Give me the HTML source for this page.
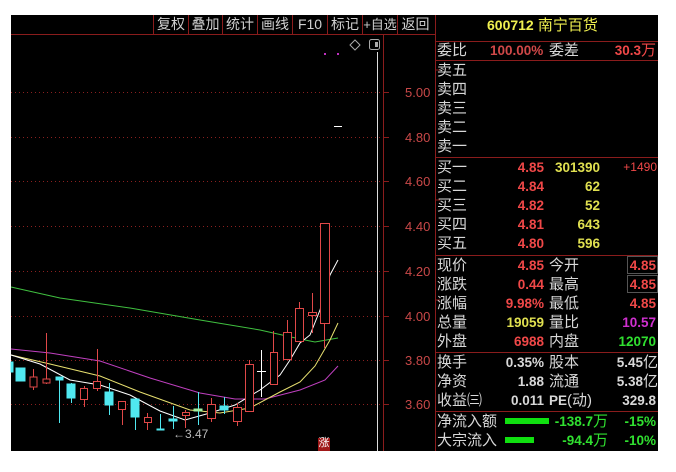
<!DOCTYPE html>
<html><head><meta charset="utf-8"><style>
*{margin:0;padding:0;box-sizing:border-box}
body{width:676px;height:472px;background:#fff;position:relative;overflow:hidden;font-family:"Liberation Sans","Noto Sans CJK SC",sans-serif}
#bg{position:absolute;left:11px;top:15px;width:647px;height:436px;background:#000}
.t{position:absolute;white-space:nowrap;line-height:19px;font-size:15px}
.l{color:#d8d8d8}
.n{font-weight:bold;font-size:13.5px;font-family:"Liberation Sans","Noto Sans CJK SC",sans-serif}
.r{color:#f04848}.y{color:#e0e050}.g{color:#30e030}.w{color:#d8d8d8}.m{color:#d030d0}
.hl{position:absolute;left:435px;width:223px;height:1px;background:#8a1c1c}
.btn{position:absolute;top:15px;height:19px;line-height:19px;color:#cfcfcf;font-size:14px;text-align:center;white-space:nowrap;overflow:hidden}
.box{position:absolute;border:1px solid #555}
</style></head><body>
<div id="bg"></div>
<svg style="position:absolute;left:0;top:0" width="676" height="472">
<line x1="11" y1="34.5" x2="435" y2="34.5" stroke="#8a1c1c"/>
<g stroke="#8a1c1c"><line x1="153.5" y1="15" x2="153.5" y2="34"/><line x1="188.5" y1="15" x2="188.5" y2="34"/><line x1="222.5" y1="15" x2="222.5" y2="34"/><line x1="257.5" y1="15" x2="257.5" y2="34"/><line x1="292.5" y1="15" x2="292.5" y2="34"/><line x1="327.5" y1="15" x2="327.5" y2="34"/><line x1="362.5" y1="15" x2="362.5" y2="34"/><line x1="397.5" y1="15" x2="397.5" y2="34"/></g>
<line x1="383.5" y1="35" x2="383.5" y2="451" stroke="#8a1c1c"/>
<line x1="435.5" y1="15" x2="435.5" y2="451" stroke="#8a1c1c"/>
<line x1="377.5" y1="52" x2="377.5" y2="451" stroke="#ddd"/>
<g stroke="#8a2020" stroke-dasharray="1,3">
<line x1="11" y1="92.5" x2="383" y2="92.5"/><line x1="11" y1="137.5" x2="383" y2="137.5"/><line x1="11" y1="181.5" x2="383" y2="181.5"/><line x1="11" y1="226.5" x2="383" y2="226.5"/><line x1="11" y1="271.5" x2="383" y2="271.5"/><line x1="11" y1="316.5" x2="383" y2="316.5"/><line x1="11" y1="360.5" x2="383" y2="360.5"/><line x1="11" y1="404.5" x2="383" y2="404.5"/>
</g>
<g stroke="#8a1c1c">
<line x1="383" y1="92.5" x2="389" y2="92.5"/><line x1="383" y1="137.5" x2="389" y2="137.5"/><line x1="383" y1="181.5" x2="389" y2="181.5"/><line x1="383" y1="226.5" x2="389" y2="226.5"/><line x1="383" y1="271.5" x2="389" y2="271.5"/><line x1="383" y1="316.5" x2="389" y2="316.5"/><line x1="383" y1="360.5" x2="389" y2="360.5"/><line x1="383" y1="404.5" x2="389" y2="404.5"/>
</g>
<g fill="#c84848" font-size="13" font-family="Liberation Sans,sans-serif">
<text x="405" y="97">5.00</text><text x="405" y="142">4.80</text><text x="405" y="186">4.60</text><text x="405" y="231">4.40</text><text x="405" y="276">4.20</text><text x="405" y="321">4.00</text><text x="405" y="365">3.80</text><text x="405" y="409">3.60</text>
</g>
<path d="M355 40 L360 45 L355 50 L350 45 Z" fill="none" stroke="#aaa"/>
<rect x="369.5" y="39.5" width="10" height="10" rx="2" fill="none" stroke="#aaa"/>
<rect x="375" y="42" width="3" height="5" fill="#aaa"/>
<rect x="324" y="53" width="2" height="2" fill="#c030c0"/><rect x="337" y="53" width="2" height="2" fill="#c030c0"/>
<line x1="334" y1="126.5" x2="342" y2="126.5" stroke="#fff"/>
<polyline fill="none" stroke="#40c040" points="11,287 60,298 130,308 200,320 260,330 300,339 315,342 338,338"/>
<polyline fill="none" stroke="#c040c0" points="11,349 50,353 100,361 150,378 200,393 235,399 265,399 300,390 325,380 338,366"/>
<polyline fill="none" stroke="#e8e070" points="11,355 50,364 100,376 140,392 190,410 220,413 250,408 280,392 300,382 315,366 330,340 338,323"/>
<polyline fill="none" stroke="#fff" points="11,355 40,364 70,380 100,385 130,395 160,411 185,420 210,413 235,405 260,390 280,375 290,360 300,343 310,335 320,310 330,275 338,260"/>
<g stroke="#e04848" fill="#000">
<line x1="33.5" y1="369" x2="33.5" y2="390"/><rect x="30" y="377" width="7" height="10"/>
<line x1="46.5" y1="333" x2="46.5" y2="384"/><rect x="43" y="379" width="7" height="4"/>
<line x1="84.5" y1="386" x2="84.5" y2="407"/><rect x="80.5" y="388.5" width="7" height="11"/>
<line x1="97.5" y1="349" x2="97.5" y2="391"/><rect x="93.5" y="381.5" width="7" height="7"/>
<line x1="122.5" y1="401" x2="122.5" y2="425"/><rect x="118.5" y="401.5" width="7" height="8"/>
<line x1="147.5" y1="413" x2="147.5" y2="430"/><rect x="144.5" y="417.5" width="7" height="5"/>
<line x1="185.5" y1="410" x2="185.5" y2="428"/><rect x="182.5" y="412.5" width="7" height="3"/>
<line x1="211.5" y1="398" x2="211.5" y2="422"/><rect x="207.5" y="404.5" width="8" height="14"/>
<line x1="237.5" y1="403" x2="237.5" y2="426"/><rect x="233.5" y="407.5" width="8" height="14"/>
<line x1="249.5" y1="360" x2="249.5" y2="411"/><rect x="245.5" y="364.5" width="8" height="47"/>
<line x1="273.5" y1="331" x2="273.5" y2="384"/><rect x="270.5" y="352.5" width="7" height="32"/>
<line x1="287.5" y1="320" x2="287.5" y2="359"/><rect x="283.5" y="332.5" width="8" height="27"/>
<line x1="299.5" y1="302" x2="299.5" y2="342"/><rect x="295.5" y="308.5" width="8" height="33"/>
<line x1="312.5" y1="293" x2="312.5" y2="333"/><rect x="308.5" y="312.5" width="8" height="3"/>
<line x1="324.5" y1="323" x2="324.5" y2="348"/><rect x="320.5" y="223.5" width="9" height="100"/>
</g>
<g fill="#50e8f0" stroke="#50e8f0">
<rect x="11" y="362" width="2" height="10"/>
<rect x="16" y="368" width="9" height="13"/>
<line x1="59.5" y1="377" x2="59.5" y2="423"/><rect x="56" y="377" width="7" height="3"/>
<line x1="71.5" y1="383" x2="71.5" y2="403"/><rect x="67" y="384" width="8" height="14"/>
<line x1="109.5" y1="383" x2="109.5" y2="415"/><rect x="105" y="392" width="8" height="13"/>
<line x1="135.5" y1="399" x2="135.5" y2="430"/><rect x="131" y="399" width="8" height="18"/>
<line x1="160.5" y1="414" x2="160.5" y2="430"/><rect x="157" y="429" width="7" height="1"/>
<line x1="173.5" y1="406" x2="173.5" y2="429"/><rect x="169" y="419" width="8" height="2"/>
<line x1="198.5" y1="392" x2="198.5" y2="425"/><rect x="194" y="409" width="8" height="2" fill="#a0f0a0" stroke="#a0f0a0"/>
<line x1="224.5" y1="397" x2="224.5" y2="414"/><rect x="220" y="406" width="8" height="4"/>
</g>
<g stroke="#fff"><line x1="261.5" y1="350" x2="261.5" y2="397"/><line x1="257" y1="371.5" x2="266" y2="371.5"/></g>
<text x="173" y="438" fill="#bbb" font-size="12" font-family="Liberation Sans,sans-serif">←3.47</text>
<rect x="318" y="438" width="12" height="13" fill="#a01818"/>
<g stroke="#8a1c1c"><line x1="436" y1="70" x2="440" y2="70"/><line x1="436" y1="200" x2="440" y2="200"/><line x1="436" y1="300" x2="440" y2="300"/></g>
<rect x="505" y="418" width="44" height="6" fill="#10e010"/>
<rect x="505" y="437" width="29" height="6" fill="#10e010"/>
</svg>
<div class="t" style="left:318px;top:434px;font-size:11px;color:#fff;width:12px;text-align:center">涨</div>
<div class="btn" style="left:154px;width:34px">复权</div>
<div class="btn" style="left:189px;width:33px">叠加</div>
<div class="btn" style="left:223px;width:34px">统计</div>
<div class="btn" style="left:258px;width:34px">画线</div>
<div class="btn" style="left:293px;width:34px">F10</div>
<div class="btn" style="left:328px;width:34px">标记</div>
<div class="btn" style="left:363px;width:34px;font-size:13px">+自选</div>
<div class="btn" style="left:398px;width:35px">返回</div>

<div class="hl" style="top:41px"></div><div class="hl" style="top:60px"></div><div class="hl" style="top:157px"></div><div class="hl" style="top:255px"></div><div class="hl" style="top:352px"></div><div class="hl" style="top:411px"></div>
<div class="t" style="left:487px;top:16px;color:#f0f050"><span class="n" style="font-size:14px">600712</span> 南宁百货</div>
<div class="t l" style="left:437px;top:41px">委比</div>
<div class="t n r" style="left:490px;top:41px;color:#d04848">100.00%</div>
<div class="t l" style="left:549px;top:41px">委差</div>
<div class="t r" style="right:20px;top:41px"><span class="n">30.3</span>万</div>
<div class="t l" style="left:437px;top:61px">卖五</div>
<div class="t l" style="left:437px;top:80px">卖四</div>
<div class="t l" style="left:437px;top:99px">卖三</div>
<div class="t l" style="left:437px;top:118px">卖二</div>
<div class="t l" style="left:437px;top:137px">卖一</div>

<div class="t l" style="left:437px;top:158px">买一</div><div class="t n r" style="right:132px;top:158px">4.85</div><div class="t n y" style="right:76px;top:158px">301390</div><div class="t r" style="right:19px;top:158px;font-size:12px">+1490</div>
<div class="t l" style="left:437px;top:177px">买二</div><div class="t n r" style="right:132px;top:177px">4.84</div><div class="t n y" style="right:76px;top:177px">62</div>
<div class="t l" style="left:437px;top:196px">买三</div><div class="t n r" style="right:132px;top:196px">4.82</div><div class="t n y" style="right:76px;top:196px">52</div>
<div class="t l" style="left:437px;top:215px">买四</div><div class="t n r" style="right:132px;top:215px">4.81</div><div class="t n y" style="right:76px;top:215px">643</div>
<div class="t l" style="left:437px;top:234px">买五</div><div class="t n r" style="right:132px;top:234px">4.80</div><div class="t n y" style="right:76px;top:234px">596</div>

<div class="box" style="left:627px;top:256px;width:31px;height:18px"></div>
<div class="box" style="left:627px;top:275px;width:31px;height:18px"></div>
<div class="t l" style="left:437px;top:256px">现价</div><div class="t n r" style="right:132px;top:256px">4.85</div><div class="t l" style="left:549px;top:256px">今开</div><div class="t n r" style="right:20px;top:256px">4.85</div>
<div class="t l" style="left:437px;top:275px">涨跌</div><div class="t n r" style="right:132px;top:275px">0.44</div><div class="t l" style="left:549px;top:275px">最高</div><div class="t n r" style="right:20px;top:275px">4.85</div>
<div class="t l" style="left:437px;top:294px">涨幅</div><div class="t n r" style="right:132px;top:294px">9.98%</div><div class="t l" style="left:549px;top:294px">最低</div><div class="t n r" style="right:20px;top:294px">4.85</div>
<div class="t l" style="left:437px;top:313px">总量</div><div class="t n y" style="right:132px;top:313px">19059</div><div class="t l" style="left:549px;top:313px">量比</div><div class="t n m" style="right:20px;top:313px">10.57</div>
<div class="t l" style="left:437px;top:332px">外盘</div><div class="t n r" style="right:132px;top:332px">6988</div><div class="t l" style="left:549px;top:332px">内盘</div><div class="t n g" style="right:20px;top:332px">12070</div>

<div class="t l" style="left:437px;top:353px">换手</div><div class="t n w" style="right:132px;top:353px">0.35%</div><div class="t l" style="left:549px;top:353px">股本</div><div class="t w" style="right:18px;top:353px"><span class="n">5.45</span>亿</div>
<div class="t l" style="left:437px;top:372px">净资</div><div class="t n w" style="right:132px;top:372px">1.88</div><div class="t l" style="left:549px;top:372px">流通</div><div class="t w" style="right:18px;top:372px"><span class="n">5.38</span>亿</div>
<div class="t l" style="left:437px;top:391px">收益㈢</div><div class="t n w" style="right:132px;top:391px">0.011</div><div class="t l" style="left:549px;top:391px"><span class="n">PE</span>(动)</div><div class="t n w" style="right:20px;top:391px">329.8</div>

<div class="t l" style="left:437px;top:412px">净流入额</div><div class="t g" style="right:68px;top:412px"><span class="n">-138.7</span>万</div><div class="t n g" style="right:20px;top:412px">-15%</div>
<div class="t l" style="left:437px;top:431px">大宗流入</div><div class="t g" style="right:68px;top:431px"><span class="n">-94.4</span>万</div><div class="t n g" style="right:20px;top:431px">-10%</div>
</body></html>
